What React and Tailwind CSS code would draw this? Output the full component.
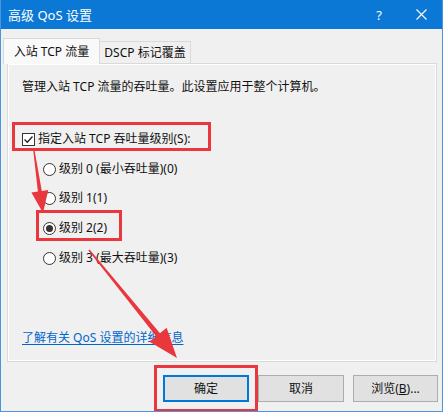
import React from "react";

function arrowPoints(x1, y1, x2, y2, w0, w1, headLen, headW) {
  const dx = x2 - x1, dy = y2 - y1;
  const len = Math.hypot(dx, dy);
  const ux = dx / len, uy = dy / len;
  const nx = -uy, ny = ux;
  const bx = x2 - ux * headLen, by = y2 - uy * headLen;
  const p = [
    [x1 + nx * w0 / 2, y1 + ny * w0 / 2],
    [bx + nx * w1 / 2, by + ny * w1 / 2],
    [bx + nx * headW / 2, by + ny * headW / 2],
    [x2, y2],
    [bx - nx * headW / 2, by - ny * headW / 2],
    [bx - nx * w1 / 2, by - ny * w1 / 2],
    [x1 - nx * w0 / 2, y1 - ny * w0 / 2],
  ];
  return p.map((q) => q[0].toFixed(1) + "," + q[1].toFixed(1)).join(" ");
}

function Radio({ checked, label }) {
  return (
    <div className="flex items-center h-4 pl-[21px]">
      <span className="w-[13px] h-[13px] rounded-full border border-[#333] bg-white flex items-center justify-center">
        {checked && <span className="w-[7px] h-[7px] rounded-full bg-[#333]" />}
      </span>
      <span className="ml-[3px]">{label}</span>
    </div>
  );
}

export default function App() {
  return (
    <div className="relative w-[443px] h-[412px] bg-[#f0f0f0] border-x border-b border-[#4a95e0] text-[12px] leading-4 text-[#111] font-['Noto_Sans','Noto_Sans_CJK_SC',sans-serif] overflow-hidden">
      {/* title bar */}
      <div className="h-[29px] -mx-px bg-[#0a78d4] flex items-center text-white">
        <span className="pl-[8px] text-[13px]">高级 QoS 设置</span>
        <span className="ml-auto mr-[34px] text-[13px]">?</span>
        <svg width="11" height="11" viewBox="0 0 11 11" className="mr-[16px]">
          <path d="M0.5 0.5 L10.5 10.5 M10.5 0.5 L0.5 10.5" stroke="white" strokeWidth="1.1" />
        </svg>
      </div>

      {/* tabs */}
      <div className="flex items-end pl-[2px] mt-[9px] h-[25px]">
        <div className="relative z-10 -mb-px w-[97px] h-[26px] bg-[#f9f9f9] border border-b-0 border-[#d9d9d9] flex items-center justify-center">
          入站 TCP 流量
        </div>
        <div className="w-[91px] h-[22px] bg-[#f0f0f0] border border-l-0 border-b-0 border-[#d9d9d9] flex items-center justify-center">
          DSCP 标记覆盖
        </div>
      </div>

      {/* panel */}
      <div className="ml-[6px] w-[430px] h-[299px] border border-[#d9d9d9] bg-[#f0f0f0] shadow-[inset_1px_1px_0_#ffffff,inset_-1px_-1px_0_#ffffff] flex flex-col pl-[14px] pt-[15px]">
        <div>管理入站 TCP 流量的吞吐量。此设置应用于整个计算机。</div>
        <div className="mt-[36px] flex items-center h-4">
          <span className="w-[13px] h-[13px] border border-[#333] bg-white flex items-center justify-center">
            <svg width="11" height="11" viewBox="0 0 11 11">
              <path d="M1.5 5.5 L4.3 8.3 L9.5 2.5" fill="none" stroke="#222" strokeWidth="1.3" />
            </svg>
          </span>
          <span className="ml-[3px]">指定入站 TCP 吞吐量级别(S):</span>
        </div>
        <div className="mt-[14px]"><Radio label="级别 0 (最小吞吐量)(0)" /></div>
        <div className="mt-[13px]"><Radio label="级别 1(1)" /></div>
        <div className="mt-[14px]"><Radio checked label="级别 2(2)" /></div>
        <div className="mt-[14px]"><Radio label="级别 3 (最大吞吐量)(3)" /></div>
        <div className="mt-auto mb-[15px] text-[#0066cc] underline underline-offset-2">了解有关 QoS 设置的详细信息</div>
      </div>

      {/* buttons */}
      <div className="flex justify-end gap-[9px] pr-[4px] mt-[13px]">
        <button className="w-[86px] h-[27px] bg-[#e1e1e1] border-2 border-[#0078d7]">确定</button>
        <button className="w-[86px] h-[27px] bg-[#e1e1e1] border border-[#adadad]">取消</button>
        <button className="w-[85px] h-[27px] bg-[#e1e1e1] border border-[#adadad]">
          浏览(<span className="underline">B</span>)...
        </button>
      </div>

      {/* annotations */}
      <div className="absolute left-[11px] top-[122px] w-[199px] h-[29px] border-[3px] border-[#e8383d] pointer-events-none" />
      <div className="absolute left-[35px] top-[210px] w-[86px] h-[31px] border-[3px] border-[#e8383d] pointer-events-none" />
      <div className="absolute left-[153px] top-[365px] w-[104px] h-[47px] border-[3px] border-[#e8383d] pointer-events-none" />
      <svg className="absolute inset-0 pointer-events-none" width="443" height="412">
        <polygon points={arrowPoints(33, 151, 42, 213, 1.5, 4, 22, 17)} fill="#e8383d" />
        <polygon points={arrowPoints(88, 250, 176, 358, 1.5, 5, 30, 22)} fill="#e8383d" />
      </svg>
    </div>
  );
}
